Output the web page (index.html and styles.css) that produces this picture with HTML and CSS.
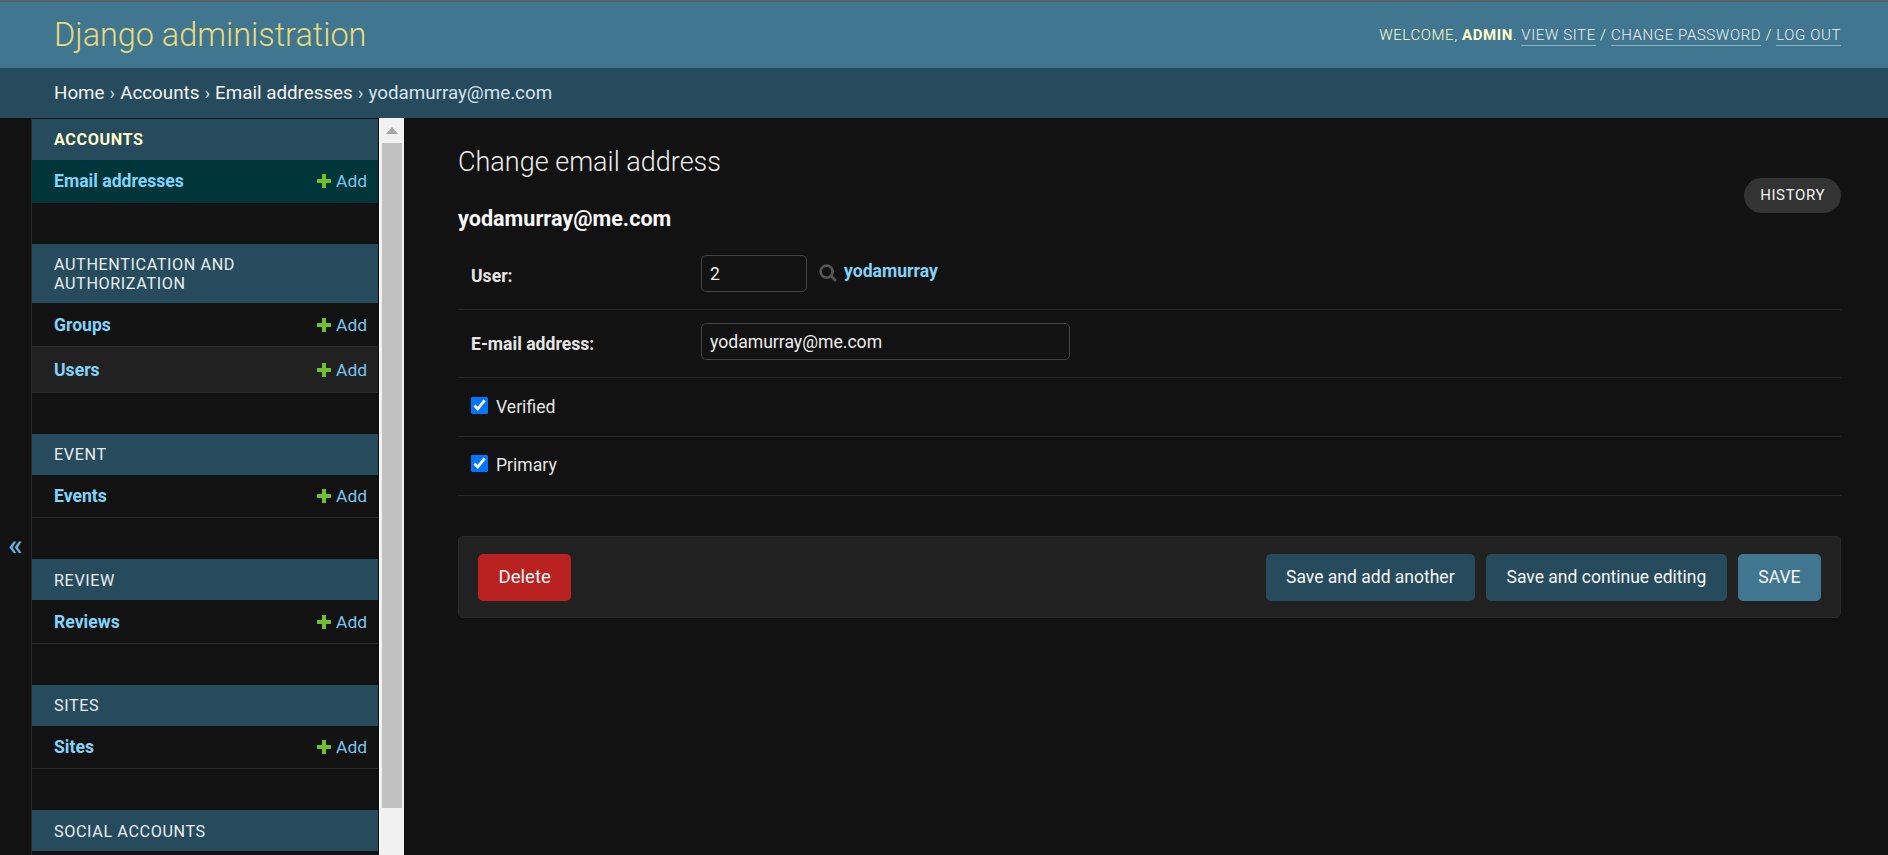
FILE: index.html
```html
<!DOCTYPE html>
<html>
<head>
  <title>Change email address | Django site admin</title>
  <link rel="stylesheet" href="styles.css">
</head>
<body>
  <div class="header">
    <div class="branding">Django administration</div>
    <div class="user-tools">
      Welcome, <strong>admin</strong>.
      <a href="#">View site</a> /
      <a href="#">Change password</a> /
      <a href="#">Log out</a>
    </div>
  </div>
  <div class="breadcrumbs">
    <a href="#">Home</a> <span class="sep">›</span>
    <a href="#">Accounts</a> <span class="sep">›</span>
    <a href="#">Email addresses</a> <span class="sep">›</span>
    yodamurray@me.com
  </div>

  <div class="main">
    <div class="toggle">«</div>

    <div class="sidebar">
      <div class="app current">
        <div class="caption">Accounts</div>
        <div class="model selected">
          <a class="model-name" href="#">Email addresses</a>
          <a class="add" href="#"><svg class="plus" viewBox="0 0 14 14"><path d="M5 0h4v5h5v4H9v5H5V9H0V5h5z"/></svg>Add</a>
        </div>
      </div>
      <div class="app">
        <div class="caption">Authentication and Authorization</div>
        <div class="model">
          <a class="model-name" href="#">Groups</a>
          <a class="add" href="#"><svg class="plus" viewBox="0 0 14 14"><path d="M5 0h4v5h5v4H9v5H5V9H0V5h5z"/></svg>Add</a>
        </div>
        <div class="model hover">
          <a class="model-name" href="#">Users</a>
          <a class="add" href="#"><svg class="plus" viewBox="0 0 14 14"><path d="M5 0h4v5h5v4H9v5H5V9H0V5h5z"/></svg>Add</a>
        </div>
      </div>
      <div class="app">
        <div class="caption">Event</div>
        <div class="model">
          <a class="model-name" href="#">Events</a>
          <a class="add" href="#"><svg class="plus" viewBox="0 0 14 14"><path d="M5 0h4v5h5v4H9v5H5V9H0V5h5z"/></svg>Add</a>
        </div>
      </div>
      <div class="app">
        <div class="caption">Review</div>
        <div class="model">
          <a class="model-name" href="#">Reviews</a>
          <a class="add" href="#"><svg class="plus" viewBox="0 0 14 14"><path d="M5 0h4v5h5v4H9v5H5V9H0V5h5z"/></svg>Add</a>
        </div>
      </div>
      <div class="app">
        <div class="caption">Sites</div>
        <div class="model">
          <a class="model-name" href="#">Sites</a>
          <a class="add" href="#"><svg class="plus" viewBox="0 0 14 14"><path d="M5 0h4v5h5v4H9v5H5V9H0V5h5z"/></svg>Add</a>
        </div>
      </div>
      <div class="app">
        <div class="caption">Social accounts</div>
      </div>
    </div>

    <div class="scrollbar">
      <div class="scroll-up"></div>
      <div class="scroll-thumb"></div>
    </div>

    <div class="content">
      <div class="title-row">
        <div>
          <h1>Change email address</h1>
          <h2>yodamurray@me.com</h2>
        </div>
        <a class="history" href="#">History</a>
      </div>

      <div class="form-row">
        <label class="field-label">User:</label>
        <input class="input-short" type="text" value="2">
        <svg class="lookup" viewBox="0 0 17 17"><circle cx="7.2" cy="7.2" r="5.7"/><path d="M11.3 11.3l4.7 4.7"/></svg>
        <a class="lookup-name" href="#">yodamurray</a>
      </div>
      <div class="form-row">
        <label class="field-label">E-mail address:</label>
        <input class="input-long" type="text" value="yodamurray@me.com">
      </div>
      <div class="form-row check-row">
        <input type="checkbox" checked>
        <label>Verified</label>
      </div>
      <div class="form-row check-row">
        <input type="checkbox" checked>
        <label>Primary</label>
      </div>

      <div class="submit-row">
        <a class="btn delete" href="#">Delete</a>
        <div class="spacer"></div>
        <a class="btn" href="#">Save and add another</a>
        <a class="btn" href="#">Save and continue editing</a>
        <a class="btn default" href="#">SAVE</a>
      </div>
    </div>
  </div>
</body>
</html>
```

FILE: styles.css
```css
* { box-sizing: border-box; }
html, body { height: 100%; }
body {
  margin: 0;
  height: 855px;
  overflow: hidden;
  display: flex;
  flex-direction: column;
  background: #121212;
  color: #eeeeee;
  font-family: Roboto, "Liberation Sans", sans-serif;
  font-size: 17px;
}
a { color: inherit; text-decoration: none; }

.header {
  height: 68px;
  flex: none;
  display: flex;
  align-items: center;
  justify-content: space-between;
  padding: 0 47px 1px 54px;
  background: #417690;
  border-top: 2px solid #5a5f63;
}
.branding {
  font-size: 32.4px;
  font-weight: 300;
  color: #eadb7c;
}
.user-tools {
  font-size: 15px;
  font-weight: 300;
  letter-spacing: 0.6px;
  text-transform: uppercase;
  color: #ffffcc;
}
.user-tools strong { font-weight: 700; }
.user-tools a {
  color: #eef3f6;
  border-bottom: 1px solid #8fb0c2;
  padding-bottom: 1px;
}

.breadcrumbs {
  height: 50px;
  flex: none;
  display: flex;
  align-items: center;
  gap: 5px;
  padding: 0 54px 1px;
  background: #264b5d;
  color: #d3e4ec;
  font-size: 18.8px;
}
.breadcrumbs a { color: #f4f4f4; }
.breadcrumbs .sep { color: #c4dce8; }

.main { flex: 1; display: flex; min-height: 0; }

.toggle {
  width: 32px;
  flex: none;
  display: flex;
  align-items: center;
  justify-content: center;
  padding-top: 116px;
  border-right: 1px solid #2a2a2a;
  color: #6fb3dc;
  font-size: 30px;
  font-weight: 500;
}

.sidebar {
  width: 347px;
  flex: none;
  overflow: hidden;
  padding-top: 1px;
  border-right: 1px solid #0c0c0c;
}
.app { margin-bottom: 41px; }
.caption {
  min-height: 40.7px;
  display: flex;
  align-items: center;
  padding: 11px 40px 10px 22px;
  background: #264b5d;
  color: #e9eef1;
  font-size: 16.2px;
  line-height: 19px;
  letter-spacing: 0.6px;
  text-transform: uppercase;
}
.current .caption {
  color: #ffffcc;
  font-weight: 700;
}
.model {
  height: 43.8px;
  display: flex;
  align-items: center;
  justify-content: space-between;
  padding: 0 11px 0 22px;
  border-bottom: 1px solid #2a2a2a;
}
.model.selected { background: #00363a; border-bottom-color: #00363a; }
.model.hover { background: #212121; height: 45.7px; }
.model-name {
  font-size: 17.6px;
  font-weight: 700;
  color: #81d4fa;
}
.add {
  display: flex;
  align-items: center;
  gap: 5px;
  font-size: 17.4px;
  font-weight: 400;
  color: #79c5f0;
}
.plus { width: 14px; height: 14px; fill: #70bf2b; }

.scrollbar {
  width: 25px;
  flex: none;
  padding: 0 2px;
  background: #f1f1f1;
  border-left: 1px solid #ffffff;
}
.scroll-up {
  width: 0;
  height: 0;
  margin: 9px auto 9px;
  border: 6px solid transparent;
  border-top: 0;
  border-bottom: 7px solid #a3a3a3;
}
.scroll-thumb { height: 665px; background: #c1c1c1; }

.content {
  flex: 1;
  min-width: 0;
  padding: 28px 47px 0 54px;
}
.title-row {
  display: flex;
  justify-content: space-between;
  align-items: flex-start;
}
h1 {
  margin: 0;
  font-size: 27px;
  line-height: 32px;
  font-weight: 300;
  color: #eeeeee;
}
h2 {
  margin: 28px 0 0;
  font-size: 21.6px;
  line-height: 25px;
  font-weight: 700;
  color: #f7f7f7;
}
.history {
  margin-top: 32px;
  height: 35px;
  display: flex;
  align-items: center;
  padding: 0 16px 1px;
  border-radius: 18px;
  background: #333333;
  color: #f4f4f4;
  font-size: 15px;
  letter-spacing: 0.6px;
  text-transform: uppercase;
}

.form-row {
  display: flex;
  align-items: flex-start;
  padding: 13px 13px 17px;
  border-bottom: 1px solid #262626;
}
.title-row + .form-row {
  margin-top: 12px;
  padding-top: 12px;
}
.field-label {
  width: 230px;
  flex: none;
  margin-top: 11px;
  font-size: 17.6px;
  font-weight: 700;
  color: #e6e6e6;
}
input[type="text"] {
  height: 37px;
  padding: 0 8px;
  border: 1px solid #444444;
  border-radius: 5px;
  background: #121212;
  color: #eeeeee;
  font-family: Roboto, "Liberation Sans", sans-serif;
  font-size: 17.6px;
}
.input-short { width: 106px; }
.input-long { width: 369px; }
.lookup {
  width: 18px;
  height: 18px;
  margin: 9px 7px 0 12px;
  fill: none;
  stroke: #555555;
  stroke-width: 2.6;
}
.lookup-name {
  margin-top: 6px;
  font-size: 17.6px;
  font-weight: 700;
  color: #81d4fa;
}
.check-row {
  align-items: center;
  gap: 8px;
  height: 59px;
  padding: 0 13px;
}
.check-row + .check-row { padding-bottom: 2px; }
.check-row input { width: 17px; height: 17px; margin: 0 0 3px; }
.check-row label { font-size: 17.6px; color: #e6e6e6; }

.submit-row {
  margin-top: 40px;
  height: 82px;
  display: flex;
  align-items: center;
  gap: 11px;
  padding: 0 19px;
  background: #212121;
  border: 1px solid #2a2a2a;
  border-radius: 5px;
}
.spacer { flex: 1; }
.btn {
  height: 47px;
  display: flex;
  align-items: center;
  padding: 0 20.5px;
  border-radius: 5px;
  background: #264b5d;
  color: #f7f7f7;
  font-size: 17.5px;
}
.btn.delete { background: #ba2121; font-size: 18.6px; }
.btn.default { background: #417690; }
```
